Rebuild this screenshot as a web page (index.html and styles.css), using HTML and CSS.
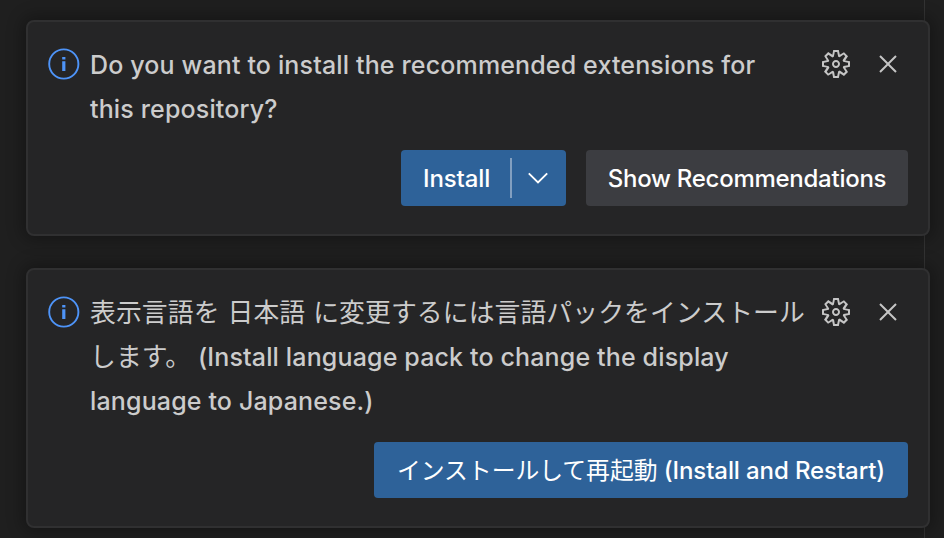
FILE: index.html
```html
<!DOCTYPE html>
<html lang="en">
<head>
<meta charset="utf-8">
<title>Notifications</title>
<link rel="stylesheet" href="styles.css">
</head>
<body>
<svg class="defs" width="0" height="0" aria-hidden="true">
  <symbol id="info" viewBox="0 0 32 32"><circle cx="15.8" cy="16" r="14.6" fill="none" stroke="currentColor" stroke-width="1.9"/><path fill="currentColor" d="M14.2 9h3.2v2.6h-3.2zM14.2 13.2h3.2V23h-3.2z"/></symbol>
  <symbol id="gear" viewBox="0 0 16 16"><path fill="currentColor" fill-rule="evenodd" d="M9.1 4.4L8.6 2H7.4l-.5 2.4-.7.3-2-1.3-.9.8 1.3 2-.2.7-2.4.5v1.2l2.4.5.3.8-1.3 2 .8.8 2-1.3.8.3.4 2.3h1.2l.5-2.4.8-.3 2 1.3.8-.8-1.3-2 .3-.8 2.3-.4V7.4l-2.4-.5-.3-.8 1.3-2-.8-.8-2 1.3-.7-.2zM9.4 1l.5 2.4L12 2.1l2 2-1.4 2.1 2.4.4v2.8l-2.4.5L14 12l-2 2-2.1-1.4-.5 2.4H6.6l-.5-2.4L4 13.9l-2-2 1.4-2.1L1 9.4V6.6l2.4-.5L2.1 4l2-2 2.1 1.4.4-2.4h2.8zm.6 7c0 1.1-.9 2-2 2s-2-.9-2-2 .9-2 2-2 2 .9 2 2zM8 9c.6 0 1-.4 1-1s-.4-1-1-1-1 .4-1 1 .4 1 1 1z"/></symbol>
  <symbol id="close" viewBox="0 0 16 16"><path fill="currentColor" d="M8 8.707l3.646 3.647.708-.707L8.707 8l3.647-3.646-.707-.708L8 7.293 4.354 3.646l-.707.708L7.293 8l-3.646 3.646.707.708L8 8.707z"/></symbol>
  <symbol id="chevron" viewBox="0 0 32 32"><path fill="none" stroke="currentColor" stroke-width="1.9" d="M6.8 11.3l9.2 9.2 9.2-9.2"/></symbol>
</svg>
<main class="workbench">
  <section class="toast">
    <div class="row">
      <svg class="icon info"><use href="#info"/></svg>
      <p class="message">Do you want to install the recommended extensions for<br>this repository?</p>
      <div class="tools"><svg class="icon"><use href="#gear"/></svg><svg class="icon"><use href="#close"/></svg></div>
    </div>
    <div class="actions">
      <div class="button split"><span class="label">Install</span><span class="divider"></span><svg class="icon"><use href="#chevron"/></svg></div>
      <div class="button secondary"><span class="label">Show Recommendations</span></div>
    </div>
  </section>
  <section class="toast">
    <div class="row">
      <svg class="icon info"><use href="#info"/></svg>
      <p class="message"><span class="cjk" lang="ja">表示言語を 日本語 に変更するには言語パックをインストール</span><br><span class="cjk" lang="ja">します。</span> (Install language pack to change the display<br>language to Japanese.)</p>
      <div class="tools"><svg class="icon"><use href="#gear"/></svg><svg class="icon"><use href="#close"/></svg></div>
    </div>
    <div class="actions">
      <div class="button restart"><span class="label"><span class="cjk" lang="ja">インストールして再起動</span> (Install and Restart)</span></div>
    </div>
  </section>
</main>
</body>
</html>
```

FILE: styles.css
```css
* { box-sizing: border-box; }
body {
  margin: 0;
  background: #1f1f1f;
  color: #cccccc;
  font: 450 25px/44px Inter, "Noto Sans CJK JP", sans-serif;
}
.defs { position: absolute; }
.workbench {
  height: 538px;
  padding: 20px 14px 10px 26px;
  display: flex;
  flex-direction: column;
  gap: 32px;
  overflow: hidden;
  background: linear-gradient(#333, #333) 924px 0 / 1px 100% no-repeat;
}
.toast {
  flex: none;
  padding: 20px 20px 28px;
  border: 2px solid #303031;
  border-radius: 8px;
  background: #252526;
  box-shadow: 0 0 16px 4px rgba(0, 0, 0, 0.3);
}
.row { display: flex; }
.icon { display: block; flex: none; width: 32px; height: 32px; }
.info { margin: 6px 10px 0 0; color: #4e94f8; }
.message {
  flex: 1;
  margin: 0;
  padding-top: 1px;
  margin-bottom: -1px;
  white-space: nowrap;
  letter-spacing: 0.15px;
}
.tools { display: flex; gap: 20px; margin: 6px 4px 0 0; color: #c5c5c5; }
.cjk { font-size: 25.8px; font-weight: 400; line-height: 1; letter-spacing: 0.11px; word-spacing: 0.6px; }
.actions { display: flex; justify-content: flex-end; gap: 20px; margin-top: 20px; }
.button {
  height: 56px;
  display: flex;
  align-items: center;
  justify-content: center;
  border-radius: 4px;
  background: #2e6299;
  color: #fff;
  font-size: 24px;
  letter-spacing: -0.1px;
  white-space: nowrap;
}
.button .label { padding-top: 1px; }
.split { width: 165px; justify-content: flex-start; padding-left: 22px; }
.split .label { width: 87px; }
.split .icon { margin-left: 10px; }
.divider { width: 2px; height: 40px; background: #829fc0; }
.secondary { width: 322px; background: #3c3d41; letter-spacing: -0.26px; }
.restart { width: 534px; }
.restart .cjk { font-size: 23.8px; letter-spacing: 0; }
```
